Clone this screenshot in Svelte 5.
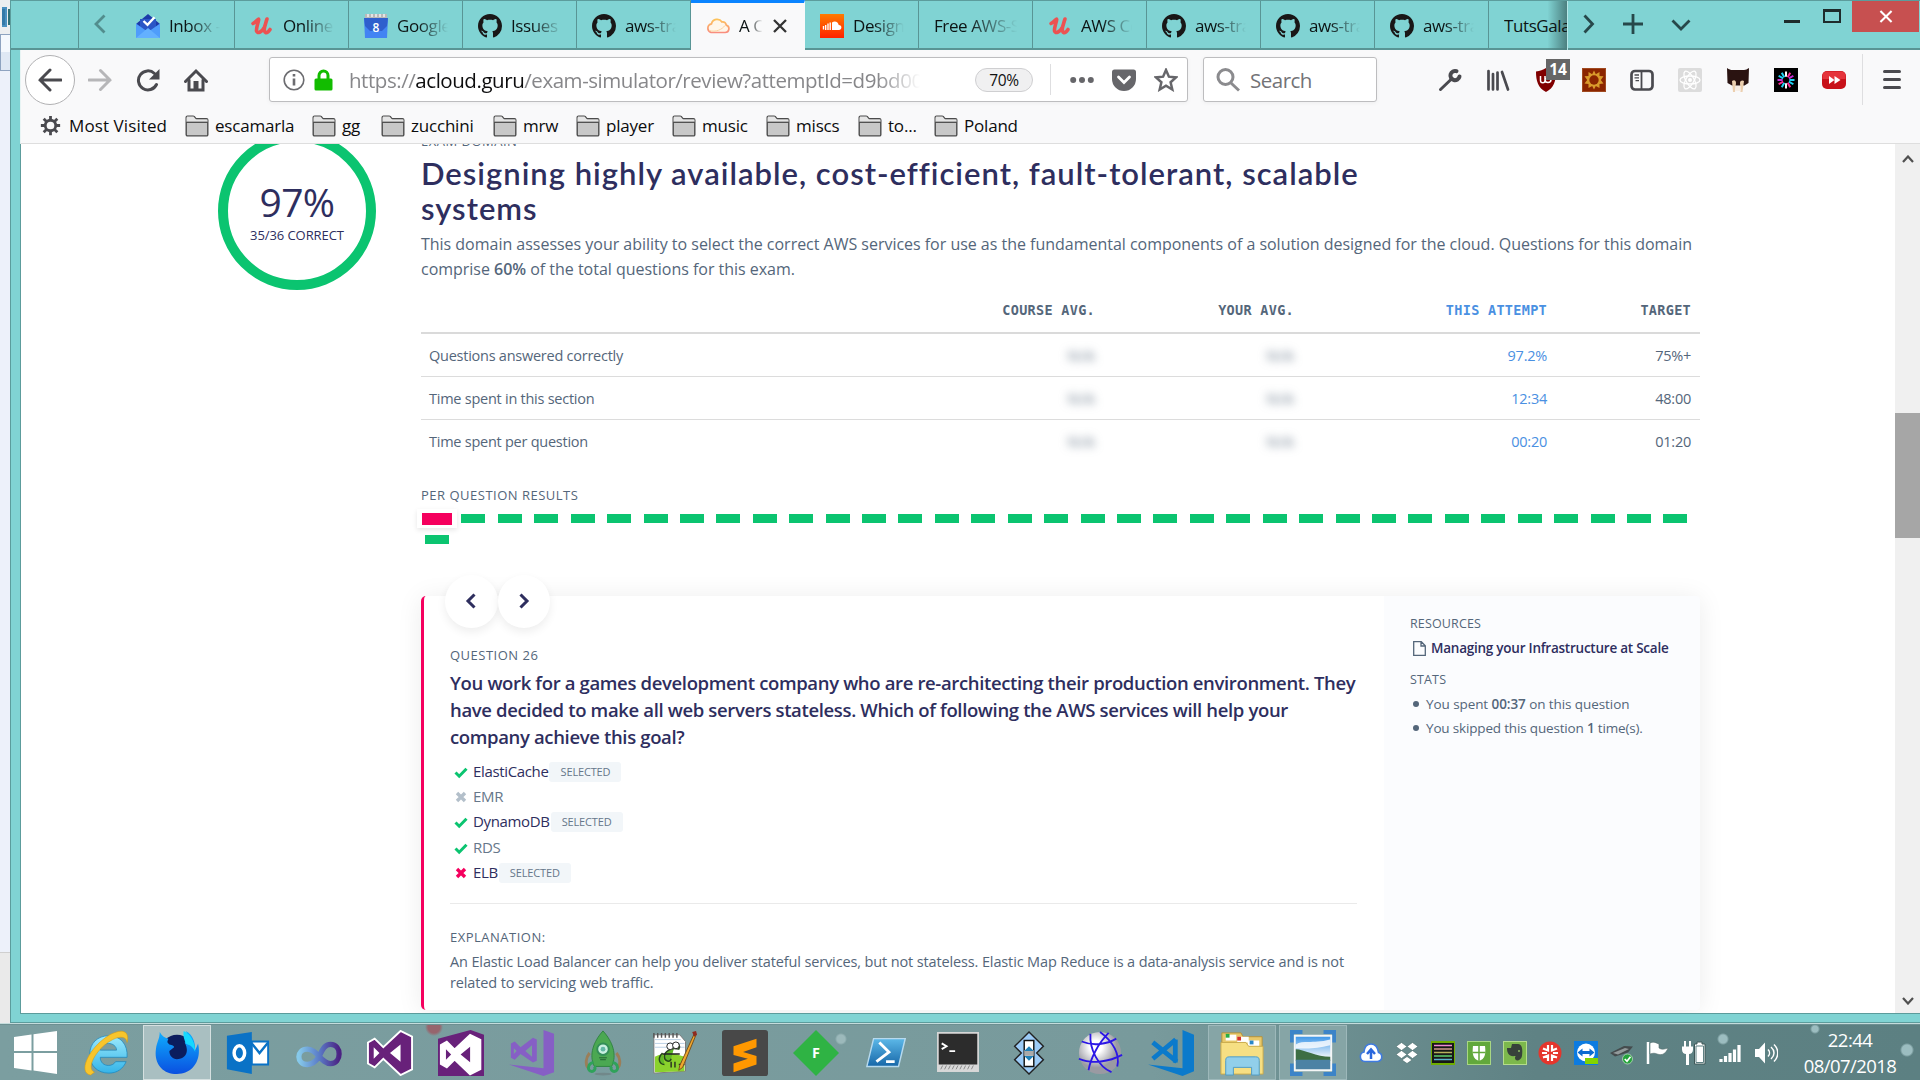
<script>
  const tabs = [
    { icon: 'inbox', label: 'Inbox - e' },
    { icon: 'udemy', label: 'Online C' },
    { icon: 'calendar', label: 'Google C' },
    { icon: 'github', label: 'Issues · a' },
    { icon: 'github', label: 'aws-train' },
    { icon: 'cloud', label: 'A Clo', active: true },
    { icon: 'soundcloud', label: 'Designin' },
    { icon: null, label: 'Free AWS-Sol' },
    { icon: 'udemy', label: 'AWS Ce' },
    { icon: 'github', label: 'aws-train' },
    { icon: 'github', label: 'aws-train' },
    { icon: 'github', label: 'aws-train' },
    { icon: null, label: 'TutsGalaxy', last: true }
  ];

  const bookmarks = [
    ['escamarla', 127], ['gg', 69], ['zucchini', 112], ['mrw', 83], ['player', 96],
    ['music', 94], ['miscs', 92], ['to...', 76], ['Poland', 100]
  ];

  const extensions = ['wrench', 'library', 'ublock', 'sun', 'sidebar', 'react', 'cat', 'burst', 'video'];

  const rows = [
    ['Questions answered correctly', '97.2%', '75%+'],
    ['Time spent in this section', '12:34', '48:00'],
    ['Time spent per question', '00:20', '01:20']
  ];

  const results = Array.from({ length: 36 }, (_, i) => i !== 0);

  const options = [
    { name: 'ElastiCache', mark: 'ok', selected: true },
    { name: 'EMR', mark: 'off', selected: false },
    { name: 'DynamoDB', mark: 'ok', selected: true },
    { name: 'RDS', mark: 'ok', selected: false },
    { name: 'ELB', mark: 'bad', selected: true }
  ];

  const apps = [
    'ie', 'firefox', 'outlook', 'infinity', 'vs', 'vsbox', 'vslight', 'rocket', 'notepad', 'sublime',
    'forest', 'powershell', 'terminal', 'diamonds', 'sphere', 'vscode', 'explorer', 'snip'
  ];
  const tray = ['clouddrive', 'dropbox', 'bars', 'shield', 'evernote', 'redball', 'teamviewer', 'scanner', 'flag', 'power', 'signal', 'volume'];

  // Twelve spokes of the burst icon, clockwise from the top
  const spokes = ['#fff', '#ff2d95', '#c62dd8', '#20d3f5', '#20d3f5', '#ff2d95', '#fff', '#20d3f5', '#ff2d95', '#c62dd8', '#20d3f5', '#20d3f5'];
</script>

{#snippet icon(name)}
  {#if name === 'inbox'}
    <svg viewBox="0 0 24 24"><path d="M0 10 12 0l12 10v3H0z" fill="#1c3aa9" /><path d="M4 5h16v11H4z" fill="#2a56c6" /><path d="M0 9.500 12 18 24 9.500V24H0z" fill="#4f9dfb" /><path d="M0 24 12 14l12 10z" fill="#63b0ff" /><path d="m7.500 7 4 3.800 7-7.500" fill="none" stroke="#fff" stroke-width="2.400" /></svg>
  {:else if name === 'udemy'}
    <svg viewBox="0 0 24 24"><path d="M3 9.500C6 8 8 5 8.500 5c1 0-2.500 8.500-2 12 .5 2.500 5 2 8-4 1-2.500 1.500-5.500 2.500-8C15 11 13.500 17.500 15.500 18.500c1.500.5 3.500-1.500 4.500-3" fill="none" stroke="#ec5252" stroke-width="3.600" stroke-linecap="round" stroke-linejoin="round" /></svg>
  {:else if name === 'calendar'}
    <svg viewBox="0 0 24 24"><path d="M1 0h22v5H1z" fill="#b9b9b9" /><path d="M4 0v3M8 0v3M12 0v3M16 0v3M20 0v3" stroke="#f1f1f1" stroke-width="1.500" /><path d="M0 4h24l-1 20H1z" fill="#4284f3" /><path d="M0 4h24l-1 8-5 5H6l-5-5z" fill="#2f5fcd" /><text x="12" y="18" text-anchor="middle" font-size="12" font-weight="600" fill="#fff">8</text></svg>
  {:else if name === 'github'}
    <svg viewBox="0 0 16 16"><path fill="#191717" d="M8 0C3.580 0 0 3.580 0 8c0 3.540 2.290 6.530 5.470 7.590.4.070.55-.17.55-.38 0-.19-.01-.82-.01-1.490-2.010.37-2.530-.49-2.690-.94-.09-.23-.48-.94-.82-1.130-.28-.15-.68-.52-.01-.53.63-.01 1.080.58 1.230.82.72 1.210 1.870.87 2.330.66.070-.52.28-.87.51-1.070-1.780-.2-3.640-.89-3.640-3.950 0-.87.31-1.590.82-2.150-.08-.2-.36-1.020.08-2.120 0 0 .67-.21 2.200.82.64-.18 1.320-.27 2-.27s1.360.09 2 .27c1.530-1.040 2.200-.82 2.200-.82.44 1.100.16 1.920.08 2.120.51.56.82 1.270.82 2.150 0 3.070-1.870 3.750-3.650 3.950.29.25.54.73.54 1.480 0 1.070-.01 1.930-.01 2.200 0 .21.15.46.55.38A8.010 8.010 0 0 0 16 8c0-4.420-3.580-8-8-8z" /></svg>
  {:else if name === 'cloud'}
    <svg viewBox="0 0 24 24"><defs><linearGradient id="cl" x2="0" y2="1"><stop stop-color="#fdc35c" /><stop offset="1" stop-color="#f98d7e" /></linearGradient></defs><path d="M5 18.500h14a3.800 3.800 0 0 0 1.300-7.400A4 4 0 0 0 16 8 5.800 5.800 0 0 0 5.500 9.800 4.500 4.500 0 0 0 5 18.500z" fill="#fff6ea" stroke="url(#cl)" stroke-width="1.700" /><path d="M3 16.500c7 2 13-1 16-5" fill="none" stroke="#fbd2a0" /></svg>
  {:else if name === 'soundcloud'}
    <svg viewBox="0 0 24 24"><defs><linearGradient id="sc" x2="0" y2="1"><stop stop-color="#ff7b00" /><stop offset="1" stop-color="#ff2200" /></linearGradient></defs><path d="M0 0h24v24H0z" fill="url(#sc)" /><path d="M12 16V8.500c3-2.500 6.500 0 6.700 2.500 3.800 0 3.300 5 .3 5z" fill="#fff" /><path d="M3.500 12v3.500M5.700 11v5M8 9.500V16M10.200 8.500V16" stroke="#fff" stroke-width="1.400" /></svg>
  {:else if name === 'wrench'}
    <svg viewBox="0 0 24 24"><path d="M2.500 21.500 14 10.500" stroke="#4a4a4f" stroke-width="3" stroke-linecap="round" /><path d="M18.500 3.200a4.600 4.600 0 1 0 3 5.300" fill="none" stroke="#4a4a4f" stroke-width="4" stroke-linecap="round" /></svg>
  {:else if name === 'library'}
    <svg viewBox="0 0 24 24"><g stroke="#4a4a4f" stroke-width="2.700" stroke-linecap="round"><path d="M2.500 3v18.500M7 6v15.500M11.500 4.500v17M16 4l6 17.500" stroke="#4a4a4f" /></g></svg>
  {:else if name === 'ublock'}
    <svg viewBox="0 0 24 24"><path d="M12 0c3 2 6 3 10 3.500C22 13 20 20 12 24 4 20 2 13 2 3.500 6 3 9 2 12 0z" fill="#800000" /><path d="M6.500 8v4.500c0 3 4.500 3 4.500 0V8m0 3.500c0 4 6 4 6 0s-4-4-5 0" fill="none" stroke="#fff" stroke-width="1.500" /></svg>
  {:else if name === 'sun'}
    <svg viewBox="0 0 24 24"><rect x=".5" y=".5" width="23" height="23" fill="#8b2500" stroke="#a04a20" /><path d="m12 2.500 1.800 3.700L17.500 4v4l4 .2-2.700 3.800 2.700 3.600-4 .4v4l-3.700-2L12 21.500 10.200 18l-3.700 2v-4l-4-.4L5.200 12 2.500 8.200l4-.2V4l3.700 2.200z" fill="#d99a2b" /><circle cx="12" cy="12" r="4.700" fill="#8b2500" /></svg>
  {:else if name === 'sidebar'}
    <svg viewBox="0 0 24 24"><rect x="1.500" y="3" width="21" height="18.500" rx="3.500" fill="none" stroke="#4a4a4f" stroke-width="2.700" /><path d="M11.500 3v18" stroke="#4a4a4f" stroke-width="1.800" /><path d="M4.500 7h4.500M4.500 9.800h4.500M5.500 12.600H9" stroke="#4a4a4f" stroke-width="1.300" /></svg>
  {:else if name === 'react'}
    <svg viewBox="0 0 24 24"><rect width="24" height="24" rx="2" fill="#dcdcdc" /><g fill="none" stroke="#fff" stroke-width="1.300"><ellipse cx="12" cy="12" rx="10" ry="4" /><ellipse cx="12" cy="12" rx="10" ry="4" transform="rotate(60 12 12)" /><ellipse cx="12" cy="12" rx="10" ry="4" transform="rotate(120 12 12)" /></g><circle cx="12" cy="12" r="2" fill="#fff" /></svg>
  {:else if name === 'cat'}
    <svg viewBox="0 0 24 24"><path d="M1 0c2 1.500 4 2 5 2h12c2 0 3-1 5-2l-.5 15-4 2.500H6L1.500 15z" fill="#2a1311" /><path d="M6 13c2-1.500 4-1 4 2l-1 9H7zM14 15c0-3 3-3 4-2l-1.500 11h-2z" fill="#ecd0b0" /><path d="M9.500 18h5v5h-5z" fill="#f8efe6" /></svg>
  {:else if name === 'burst'}
    <svg viewBox="0 0 24 24"><path d="M0 0h24v24H0z" fill="#000" />{#each spokes as color, i}<path d="M12 3.500v5.200" stroke={color} stroke-width="2" transform="rotate({i * 30} 12 12)" />{/each}</svg>
  {:else if name === 'video'}
    <svg viewBox="0 0 24 24"><rect y="3" width="24" height="18" rx="5" fill="#c8121a" /><path d="M.5 11V8c0-3 1.500-4.500 4.500-4.500h14c3 0 4.500 1.500 4.500 4.500v3z" fill="#e5343b" /><path d="m7 8 5.500 4L7 16zM12.500 8l6 4-6 4z" fill="#fff" /></svg>
  {:else if name === 'folder'}
    <svg viewBox="0 0 24 22"><path d="M1.200 4V2.500c0-.8.5-1.300 1.300-1.300h5.700c1 0 1.600.8 2.300 2 .3.500.8.600 1.500.6h9.500c.8 0 1.300.5 1.300 1.300v14.600c0 .8-.5 1.200-1.300 1.200h-19c-.8 0-1.300-.5-1.300-1.300z" fill="#c8c8c8" stroke="#4c4c4c" stroke-width="1.400" /><path d="M1.500 3v4h21V4.500H11L8.500 1.600H2z" fill="#e4e4e4" /><path d="M1.200 7.300h21.600" stroke="#4c4c4c" stroke-width="1.300" /></svg>
  {:else if name === 'ie'}
    <svg viewBox="0 0 48 48"><defs><linearGradient id="ieg" x2="0" y2="1"><stop stop-color="#9be9fd" /><stop offset="1" stop-color="#35b4e8" /></linearGradient></defs><path d="M45 33c-3 7-9 12-18 12C15 45 7 37 7 25.500S15 6 27 6s20 9 19 22.500H18c0 5.500 4 8.500 8.500 8.500 3.500 0 6-1.500 7.500-4zM18 21h17c0-4-4-7-8.500-7S18 17 18 21z" fill="url(#ieg)" stroke="#1f88bd" stroke-width=".8" fill-rule="evenodd" /><path d="M8 47C-6 45 6 18 28 5c13-7 21-4 18 8-.5-6-7-7-15-3C15 18 2 40 12 44z" fill="#f8c52c" stroke="#d99d10" stroke-width=".6" /></svg>
  {:else if name === 'firefox'}
    <svg viewBox="0 0 48 48"><defs><linearGradient id="ffg" x2="0" y2="1"><stop stop-color="#0fb0ff" /><stop offset="1" stop-color="#0a4fe0" /></linearGradient></defs><circle cx="24" cy="22" r="17" fill="#0b1d5e" /><path d="M6 2c2 4 5 6 9 7-1 3-2 4 1 6 3 1 5 1 5 3l-5 4c0 6 5 10 11 8 8-2 9-10 5-17 3 1 4-8 1-12 8 4 10 12 10 20l3-7c4 18-6 32-22 32S0 34 2 20C3 12 6 9 6 2z" fill="url(#ffg)" /><path d="M31 1c8 4 12 12 12 22-3-8-9-8-10-9-1-4-3-7-2-13z" fill="#15d8ff" /></svg>
  {:else if name === 'outlook'}
    <svg viewBox="0 0 48 48"><path d="M28 12h17v24H28z" fill="#fff" stroke="#0a72c6" stroke-width="2" /><path d="m28 14 8 10 9-11" fill="none" stroke="#0a72c6" stroke-width="2.500" /><path d="M2 6 28 2v44L2 41z" fill="#0a72c6" /><ellipse cx="15" cy="24" rx="5.500" ry="7.500" fill="none" stroke="#fff" stroke-width="3.600" /></svg>
  {:else if name === 'infinity'}
    <svg viewBox="0 0 48 48"><defs><linearGradient id="ing"><stop stop-color="#86c9ea" /><stop offset=".5" stop-color="#5a7cc8" /><stop offset="1" stop-color="#4b2283" /></linearGradient></defs><path d="M24 28c-4 6-8 8-12 8-12 0-12-16 0-16 10 0 14 15 24 15 12 0 12-20 0-20-7 0-9 7-12 13z" fill="none" stroke="url(#ing)" stroke-width="5.500" /></svg>
  {:else if name === 'vs' || name === 'vsbox'}
    <svg viewBox="0 0 48 48">{#if name === 'vsbox'}<path d="M0 9 34 0l14 5v43H0z" fill="#68217a" />{/if}<path d="M1 13 8 9l9 9L35 1l12 6v34l-12 6-18-17-9 9-7-4z" fill={name === 'vs' ? '#68217a' : '#fff'} stroke="#fff" stroke-width="2" transform={name === 'vs' ? '' : 'translate(2 4) scale(.9)'} /><path d="m7 18 6 6-6 6zM24 24l11-9v18z" fill={name === 'vs' ? '#fff' : '#68217a'} transform={name === 'vs' ? '' : 'translate(2 4) scale(.9)'} /></svg>
  {:else if name === 'vslight'}
    <svg viewBox="0 0 48 48"><path d="m36 0 11 4v40l-11 4L0 36l36 4z" fill="#865fc5" /><path d="m2 14 4-2 6 6L25 8l4 2v22l-4 2-13-9-6 6-4-2zm3 5v6l3-3zm19-3-7 6 7 6z" fill="#865fc5" fill-rule="evenodd" /></svg>
  {:else if name === 'rocket'}
    <svg viewBox="0 0 48 48"><ellipse cx="24" cy="46" rx="9" ry="1.500" fill="#71888a" /><path d="M10 24c-4 5-5 12-1 16M38 24c4 5 5 12 1 16" fill="none" stroke="#9b7e58" stroke-width="3" /><path d="M24 1C14 12 9 26 15 38h18C39 26 34 12 24 1z" fill="#4ba852" stroke="#2f8440" /><path d="M14 34c-5 0-7 7-3 9 3 1 6-2 4-5M34 34c5 0 7 7 3 9-3 1-6-2-4-5" fill="none" stroke="#2fa25a" stroke-width="3" /><circle cx="24" cy="20" r="6" fill="#c8efe0" stroke="#338e58" stroke-width="2" /><circle cx="24" cy="20" r="2.500" fill="#64b7a5" /><path d="M20 29h8M21 31h6" stroke="#225f35" /></svg>
  {:else if name === 'notepad'}
    <svg viewBox="0 0 48 48"><path d="M3 5h27l6 7v31L3 45z" fill="#fff" stroke="#777" /><path d="M4 14h31M4 18h31M4 10h27" stroke="#b9cfe4" /><path d="M4 28c10-5 20-4 31 0v15L4 44z" fill="#8bd22c" /><path d="M25 15c4-2 6 2 4 5-8-2-15 2-15 8 0 5 6 6 7 2m-9-6c-6 6-3 12 2 12" fill="#62b829" stroke="#26441c" stroke-width="1.500" /><circle cx="20" cy="17" r="3.500" fill="#fff" stroke="#222" /><circle cx="26" cy="16" r="3.500" fill="#fff" stroke="#222" /><path d="M12 25h18M21 33v6M25 33v6M29 36h6M32 33v6" stroke="#222" stroke-width="1.400" /><path d="M3 3v5M7 3v5M11 3v5M15 3v5M19 3v5M23 3v5M27 3v5" stroke="#555" stroke-width="1.500" /><path d="m46 2 1 3-14 34-4 3 1-5z" fill="#f0a72d" stroke="#744e1b" /><path d="m43 2 4-1 1 4-3 2z" fill="#8e2b20" /></svg>
  {:else if name === 'sublime'}
    <svg viewBox="0 0 48 48"><rect width="48" height="48" rx="3" fill="#484848" /><path d="m12 17 24-8v9l-14 5 14 4v9l-24 8v-9l15-5-15-4z" fill="#ff9800" /></svg>
  {:else if name === 'forest'}
    <svg viewBox="0 0 48 48"><path d="m24 0 24 24-24 24L0 24z" fill="#2fb344" /><text x="24" y="29.500" text-anchor="middle" font-size="15" font-weight="700" fill="#fff">F</text></svg>
  {:else if name === 'powershell'}
    <svg viewBox="0 0 48 48"><defs><linearGradient id="psg" x2="0" y2="1"><stop stop-color="#5cb8e8" /><stop offset="1" stop-color="#1767a8" /></linearGradient></defs><path d="M10 9h33l-7 29H3z" fill="url(#psg)" stroke="#b7daee" stroke-width="1.500" /><path d="m16 13 10 10-13 10M23 33h9" fill="none" stroke="#fff" stroke-width="3" /></svg>
  {:else if name === 'terminal'}
    <svg viewBox="0 0 48 48"><path d="M3 3h42v40H3z" fill="#2c2c2c" stroke="#d7d7d7" stroke-width="1.800" /><path d="M3 36h42v7H3z" fill="#d8d8d8" /><path d="M6 41l2-4m2 4 2-4m2 4 2-4m2 4 2-4m2 4 2-4m2 4 2-4m2 4 2-4m2 4 2-4m2 4 2-4" stroke="#888" /><path d="m7 14 5 3-5 3M15 22h6" fill="none" stroke="#fff" stroke-width="2" /></svg>
  {:else if name === 'diamonds'}
    <svg viewBox="0 0 48 48"><path d="m24 2 15 15-7 7 7 7-15 15L9 31l7-7-7-7z" fill="#9ccbf7" stroke="#222" stroke-width="1.500" /><path d="M19 11h10v27H19z" fill="#fff" stroke="#111" stroke-width="1.500" /><path d="M19 21h10v6H19z" fill="#aaa" /><path d="m19 22 5-5 5 5zM19 27h10l-5 5z" fill="#2080b8" /></svg>
  {:else if name === 'sphere'}
    <svg viewBox="0 0 48 48"><defs><radialGradient id="spg" cx=".4" cy=".35"><stop offset=".3" stop-color="#fff" /><stop offset="1" stop-color="#9a9aa2" /></radialGradient></defs><circle cx="24" cy="24" r="22" fill="url(#spg)" /><g fill="none" stroke="#2b16e6" stroke-width="1.900"><path d="M5 12c12 5 26 3 36-3M2 30c14 6 32 3 45-4M14 4c-1 16 8 34 22 40M33 3C22 14 14 30 12 42M24 2c14 10 21 24 18 36" /></g></svg>
  {:else if name === 'vscode'}
    <svg viewBox="0 0 48 48"><path d="m36 0 12 5v38l-12 5L0 36l36 4z" fill="#0b7acb" /><path d="M5 13 30 33M5 30l24-20" stroke="#0b7acb" stroke-width="5" /><path d="M26 10h5v24h-5z" fill="#0b7acb" /></svg>
  {:else if name === 'explorer'}
    <svg viewBox="0 0 48 48"><path d="M3 3h20l2 4h20v36H3z" fill="#e8c96a" stroke="#b69238" /><path d="M7 5h11v6H7zM19 7h12v6H19zM30 11h12v6H30z" fill="#fff" /><path d="M7 4h4v4H7z" fill="#27ae45" /><path d="M19 7h4v4h-4z" fill="#d5342a" /><path d="M32 11h4v4h-4z" fill="#2a86c8" /><path d="M2 13h26l3 4h15v29H2z" fill="#f6df83" stroke="#c9a94c" /><path d="M7 47V32c0-3 1-4 4-4h27c3 0 4 1 4 4v15h-8v-8H15v8z" fill="#91cfea" stroke="#4e9bc3" /></svg>
  {:else if name === 'snip'}
    <svg viewBox="0 0 48 48"><defs><linearGradient id="sng" x2="0" y2="1"><stop stop-color="#3f97e8" /><stop offset="1" stop-color="#f2f8fc" /></linearGradient></defs><path d="M2 13V2h11M35 2h11v11M46 35v11H35M13 46H2V35" fill="none" stroke="#3c84c8" stroke-width="4.500" /><path d="M4 5h40v38H4z" fill="#f4f6f6" /><path d="M6 7h36v22H6z" fill="url(#sng)" /><path d="M6 15c8-5 16 0 36-5v6c-14 3-20 4-36 3z" fill="#fff" opacity=".8" /><path d="M6 20c8 0 22 8 36 8v4H6z" fill="#3d6e43" /><path d="M6 31h36v10H6z" fill="#4c82a4" /></svg>
  {:else if name === 'clouddrive'}
    <svg viewBox="0 0 24 24"><path d="M6 20.500h12.500c6-1 5-8 1-9C18.500 5 16 3 12 3S5.500 6 5 11c-5 1-5 9 1 9.500z" fill="#fff" stroke="#3f7be0" stroke-width="1.600" /><path d="M12 18V9m-4 4 4-4.500 4 4.500" fill="none" stroke="#2a67dd" stroke-width="2.500" /></svg>
  {:else if name === 'dropbox'}
    <svg viewBox="0 0 24 24"><path d="m6.500 1.500 5.500 4-5.500 4L1 5.500zM17.500 1.500l5.500 4-5.500 4-5.500-4zM6.500 9.500l5.500 4-5.500 4-5.500-4zM17.500 9.500l5.500 4-5.500 4-5.500-4zM12 15.500l5 3.500-5 3.500L7 19z" fill="#fff" stroke="#48696a" stroke-width=".6" /></svg>
  {:else if name === 'bars'}
    <svg viewBox="0 0 24 24"><path d="M0 0h24v24H0z" fill="#6fae00" /><path d="M1 2h22v20H1z" fill="#171717" /><g stroke-width="1.500"><path d="M3 4.500h18" stroke="#ef8bd0" /><path d="M3 8h18" stroke="#d49b8c" /><path d="M3 11.500h18" stroke="#b8b05c" /><path d="M3 15h18" stroke="#5fce6f" /><path d="M3 18.500h18" stroke="#59b2ce" /></g></svg>
  {:else if name === 'shield'}
    <svg viewBox="0 0 24 24"><rect x=".5" y=".5" width="23" height="23" fill="#62a83c" stroke="#a8d783" /><path d="M6 5c4 0 8 0 12 0 1 8 0 13-6 15C6 18 5 13 6 5z" fill="#fff" /><path d="M12 5v15M5.500 11.500h13" stroke="#62a83c" stroke-width="1.500" /></svg>
  {:else if name === 'evernote'}
    <svg viewBox="0 0 24 24"><rect x=".5" y=".5" width="23" height="23" fill="#7cb84c" stroke="#b4dc8c" /><path d="M9 3h6c4 0 5 5 4 12-1 5-7 6-7 2 0-3 3-2 3-1l-3-1c-6 1-8-3-8-8h4z" fill="#37413a" /><circle cx="16" cy="10" r="1" fill="#8cbb66" /></svg>
  {:else if name === 'redball'}
    <svg viewBox="0 0 24 24"><circle cx="12" cy="12" r="11.500" fill="#e5352c" /><g stroke="#fff" stroke-width="2.200" fill="none"><path d="M10 4v5.500L5 7.500M14 4v5.500l5-2M10 20v-5.500l-5 2M14 20v-5.500l5 2M4 12h5M15 12h5" /></g></svg>
  {:else if name === 'teamviewer'}
    <svg viewBox="0 0 24 24"><path d="M0 0h24v24H0z" fill="#0c7be0" /><circle cx="12" cy="11.500" r="9" fill="#fff" /><path d="m3.500 11.500 5-4v2.500h7V7.500l5 4-5 4V13h-7v2.500z" fill="#0c6bd0" /><path d="M11 17h13v6H11z" fill="#83d400" /></svg>
  {:else if name === 'scanner'}
    <svg viewBox="0 0 24 24"><path d="M0 12 14 5l9 .5-5 6-13 4z" fill="#444b4d" /><path d="m3 12 12-5 4 1-11 5.500z" fill="#929a9b" /><circle cx="17.500" cy="18" r="5" fill="#25a33b" stroke="#b9d9be" stroke-width=".8" /><path d="m14.800 18 2.200 2.300 3.500-4.500" fill="none" stroke="#fff" stroke-width="1.700" /></svg>
  {:else if name === 'flag'}
    <svg viewBox="0 0 24 24"><path d="M2 1v22" stroke="#fff" stroke-width="2.500" /><path d="M4 2c4-2 6 0 9 1v4c3 2 6 1 9 0-2 5-5 8-11 6-2-1-4-1-7 0z" fill="#fff" stroke="#506b6c" stroke-width=".6" /></svg>
  {:else if name === 'power'}
    <svg viewBox="0 0 24 24"><path d="M3 0v6M8 0v6" stroke="#fff" stroke-width="2" /><path d="M0 5.500h11v3c0 3-2 4.500-4 4.500v11H4V13c-2 0-4-1.500-4-4.500z" fill="#fff" /><path d="M12.500 3H15V1h5v2h3v20h-10.500z" fill="#fff" stroke="#3f5859" stroke-width="1" /><path d="M14 5h7.500v16.500H14z" fill="none" stroke="#5f8082" stroke-width="1" /></svg>
  {:else if name === 'signal'}
    <svg viewBox="0 0 24 24"><path d="M3 21v-3M7.500 21v-6M12 21v-9M16.500 21V8.500M21 21V4" stroke="#fff" stroke-width="3.200" /></svg>
  {:else if name === 'volume'}
    <svg viewBox="0 0 24 24"><path d="M1 8h4l6-6.500v21L5 16H1z" fill="#fff" /><path d="M14 8.500c2 2 2 5 0 7M17 6c4 3.500 4 8.500 0 12M20 3.500c5 5 5 12 0 17" fill="none" stroke="#fff" stroke-width="1.500" /></svg>
  {/if}
{/snippet}

<div class="desktop">
  <div class="work">
    <div class="behind">
      <div class="behind-top"></div>
      <div class="behind-bar"></div>
      <div class="behind-body"></div>
      <div class="behind-foot"></div>
    </div>

    <div class="window">
      <div class="tabstrip">
        <div class="lead"></div>
        <div class="scroll-left">
          <svg viewBox="0 0 12 20"><path d="M10.500 1.500 2 10l8.500 8.500" /></svg>
        </div>
        {#each tabs as tab}
          <div class="tab" class:active={tab.active} class:last={tab.last}>
            {#if tab.icon}<span class="favicon">{@render icon(tab.icon)}</span>{/if}
            <span class="tab-label">{tab.label}</span>
            {#if tab.active}
              <svg class="tab-close" viewBox="0 0 14 14"><path d="m1 1 12 12M13 1 1 13" /></svg>
            {/if}
          </div>
        {/each}
        <div class="strip-tools">
          <svg class="t-right" viewBox="0 0 12 20"><path d="m1.500 1.500 8 8.500-8 8.500" /></svg>
          <svg class="t-plus" viewBox="0 0 22 22"><path d="M11 1v20M1 11h20" /></svg>
          <svg class="t-down" viewBox="0 0 20 12"><path d="m1.500 1.500 8.500 8.500 8.500-8.500" /></svg>
        </div>
        <div class="win-buttons">
          <span class="w-min"></span>
          <span class="w-max"></span>
          <span class="w-close"><svg viewBox="0 0 14 14"><path d="m1 1 12 12M13 1 1 13" /></svg></span>
        </div>
      </div>

      <div class="chrome">
        <div class="toolbar">
          <div class="back"><svg viewBox="0 0 24 24"><path d="M23 12H2M12 2 2 12l10 10" /></svg></div>
          <div class="slot fwd"><svg viewBox="0 0 24 24"><path d="M1 12h21M12.500 2.500 22 12l-9.500 9.500" /></svg></div>
          <div class="slot"><svg viewBox="0 0 24 24"><path d="M20.500 16.500A9.500 9.500 0 1 1 18.500 5.500" /><path class="solid" d="M23.500 1v10.500H13z" /></svg></div>
          <div class="slot"><svg viewBox="0 0 24 24"><path d="M1.500 13.500 12 3l10.500 10.500" /><path d="M5 12v10h14V12" /><path class="solid" d="M9.500 13h5v9h-5z" /></svg></div>
          <div class="urlbar">
            <svg class="info" viewBox="0 0 22 22"><circle cx="11" cy="11" r="9.800" /><path d="M11 9.500v7M11 5v2.600" /></svg>
            <svg class="lock" viewBox="0 0 18 22"><path class="shackle" d="M4.500 11V6.500a4.500 4.500 0 0 1 9 0V11" /><rect y="9.500" width="18" height="12" rx="1.500" /></svg>
            <span class="url">https://<b>acloud.guru</b>/exam-simulator/review?attemptId=d9bd00</span>
            <span class="zoom">70%</span>
            <span class="sep"></span>
            <svg class="dots" viewBox="0 0 24 24"><circle cx="3.200" cy="12" r="3" /><circle cx="12" cy="12" r="3" /><circle cx="20.800" cy="12" r="3" /></svg>
            <svg class="pocket" viewBox="0 0 24 24"><path d="M2.500 1.500h19A2.500 2.500 0 0 1 24 4v7a12 12 0 0 1-24 0V4a2.500 2.500 0 0 1 2.500-2.500z" /><path class="tick" d="m6.500 9 5.500 5.500L17.500 9" /></svg>
            <svg class="star" viewBox="0 0 24 24"><path d="m12 2 2.900 6.700 7.100.7-5.400 4.900 1.700 7.200-6.300-3.800-6.300 3.800 1.700-7.200L2 9.400l7.100-.7z" /></svg>
          </div>
          <div class="search">
            <svg viewBox="0 0 24 24"><circle cx="9.500" cy="9" r="7.500" /><path d="m15 15 8 7.500" /></svg>
            <span>Search</span>
          </div>
          <div class="exts">
            {#each extensions as name}
              <div class="slot ext">{@render icon(name)}{#if name === 'ublock'}<span class="badge">14</span>{/if}</div>
            {/each}
          </div>
          <div class="menu"><span></span><span></span><span></span></div>
        </div>

        <div class="bookmarks">
          <div class="visited">
            <svg viewBox="0 0 24 24"><circle cx="12" cy="12" r="6" /><path d="M12 1v5M12 18v5M1 12h5M18 12h5M4.200 4.200l3.500 3.500M16.300 16.300l3.500 3.500M19.800 4.200l-3.500 3.500M7.700 16.300l-3.500 3.500" /></svg>
            <span>Most Visited</span>
          </div>
          {#each bookmarks as [label, width]}
            <div class="bookmark" style="width:{width}px">{@render icon('folder')}<span>{label}</span></div>
          {/each}
        </div>
      </div>

      <div class="viewport">
        <main>
          <aside class="score">
            <div class="ring">
              <div class="percent">97%</div>
              <div class="correct">35/36 CORRECT</div>
            </div>
          </aside>

          <section class="domain">
            <div class="eyebrow top">EXAM DOMAIN</div>
            <h1>Designing highly available, cost-efficient, fault-tolerant, scalable<br />systems</h1>
            <p class="intro">This domain assesses your ability to select the correct AWS services for use as the fundamental components of a solution designed for the cloud. Questions for this domain<br />comprise <b>60%</b> of the total questions for this exam.</p>

            <div class="table">
              <div class="tr head"><span></span><span>COURSE AVG.</span><span>YOUR AVG.</span><span class="blue">THIS ATTEMPT</span><span>TARGET</span></div>
              {#each rows as [label, attempt, target]}
                <div class="tr">
                  <span class="name">{label}</span>
                  <span class="hidden-value">N/A</span>
                  <span class="hidden-value">N/A</span>
                  <span class="blue">{attempt}</span>
                  <span>{target}</span>
                </div>
              {/each}
            </div>

            <div class="eyebrow per">PER QUESTION RESULTS</div>
            <div class="results">
              {#each results as correct}
                <div class="cell" class:wrong={!correct}><span></span></div>
              {/each}
            </div>

            <article class="card">
              <div class="pager">
                <span><svg viewBox="0 0 12 18"><path d="M9.500 2.500 3 9l6.500 6.500" /></svg></span>
                <span><svg viewBox="0 0 12 18"><path d="M2.500 2.500 9 9l-6.500 6.500" /></svg></span>
              </div>
              <div class="question">
                <div class="eyebrow">QUESTION 26</div>
                <h2>You work for a games development company who are re-architecting their production environment. They<br />have decided to make all web servers stateless. Which of following the AWS services will help your<br />company achieve this goal?</h2>
                <ul class="options">
                  {#each options as option}
                    <li class={option.mark} class:selected={option.selected}>
                      {#if option.mark === 'ok'}
                        <svg viewBox="0 0 14 14"><path d="m1.500 7.500 3.700 3.700 7.300-7.500" /></svg>
                      {:else}
                        <svg viewBox="0 0 14 14"><path d="m3 3 8 8M11 3l-8 8" /></svg>
                      {/if}
                      <span class="answer">{option.name}</span>
                      {#if option.selected}<span class="tag">SELECTED</span>{/if}
                    </li>
                  {/each}
                </ul>
                <hr />
                <div class="eyebrow">EXPLANATION:</div>
                <p class="explain">An Elastic Load Balancer can help you deliver stateful services, but not stateless. Elastic Map Reduce is a data-analysis service and is not<br />related to servicing web traffic.</p>
              </div>
              <div class="side">
                <div class="eyebrow small">RESOURCES</div>
                <div class="resource">
                  <svg viewBox="0 0 13 15"><path d="M.7.700h7.600l4 4v9.600H.7zM8 .7V5h4.300" /></svg>
                  <span>Managing your Infrastructure at Scale</span>
                </div>
                <div class="eyebrow small stats">STATS</div>
                <ul class="facts">
                  <li><i></i><span class="spent">You spent <b>00:37</b> on this question</span></li>
                  <li><i></i><span>You skipped this question <b>1</b> time(s).</span></li>
                </ul>
              </div>
            </article>
          </section>
        </main>
        <div class="scrollbar">
          <svg viewBox="0 0 12 8"><path d="m1 7 5-5.500L11 7" /></svg>
          <div class="thumb"></div>
          <svg viewBox="0 0 12 8"><path d="m1 1 5 5.500L11 1" /></svg>
        </div>
      </div>
    </div>
  </div>

  <div class="taskbar">
    <div class="start"><svg viewBox="0 0 43 43"><path d="M0 6 17.500 3.500V20H0zM19.500 3.200 43 0v20H19.500zM0 22h17.500v17.500L0 37zM19.500 22H43v21l-23.500-3.500z" /></svg></div>
    {#each apps as app}
      <div class="app {app}">{@render icon(app)}</div>
    {/each}
    <div class="tray">
      {#each tray as item}
        <div class="tray-item">{@render icon(item)}</div>
      {/each}
    </div>
    <div class="clock"><div>22:44</div><div>08/07/2018</div></div>
  </div>
</div>

<style>
  :global(body) { margin: 0; overflow: hidden; }
  .desktop { width: 1920px; height: 1080px; display: flex; flex-direction: column; overflow: hidden; font-family: "Open Sans", "Noto Sans", sans-serif; background: #fff; }
  svg { display: block; flex: none; }
  h1, h2, p, ul { margin: 0; padding: 0; font-weight: 400; }
  ul { list-style: none; }

  .work { height: 1023px; display: flex; border-bottom: 1px solid #c4dcdc; }
  .behind { width: 10px; display: flex; flex-direction: column; background: #edf1fa; }
  .behind-top { height: 34px; background: linear-gradient(90deg, #3479a8 0 3px, transparent 3px 6px, #2f6f76 6px) 2px 9px / 8px 16px no-repeat, linear-gradient(90deg, transparent 0 2px, #4a90c0 2px 7px, transparent 7px) 0 7px / 10px 20px no-repeat, #eceef0; }
  .behind-bar { height: 37px; border: 1px solid #8ea3c0; border-right: 0; box-sizing: border-box; background: linear-gradient(#f4f8fd 0 50%, #dfe8f4 50%); }
  .behind-body { flex: 1; }
  .behind-foot { height: 70px; border-top: 1px solid #cfcfcf; background: #eaeaea; }

  .window { flex: 1; min-width: 0; display: flex; flex-direction: column; background: #80d3d3; border-left: 1px solid #5c9c9c; border-bottom: 1px solid #5c9c9c; }

  .tabstrip { height: 50px; box-sizing: border-box; display: flex; border-top: 1px solid #5c9c9c; border-bottom: 2px solid #599595; }
  .lead { width: 67px; }
  .scroll-left { width: 43px; box-sizing: border-box; border-left: 1px solid #599595; padding: 13px 0 0 15px; }
  .scroll-left svg { width: 12px; height: 20px; }
  .scroll-left path { fill: none; stroke: #528d8d; stroke-width: 2.800; }
  .tab { width: 114px; height: 49px; box-sizing: border-box; flex: none; display: flex; align-items: center; padding: 1px 13px 1px 15px; border-right: 1px solid #599595; }
  .favicon { flex: none; width: 24px; height: 24px; margin-right: 9px; }
  .favicon svg { width: 24px; height: 24px; }
  .tab-label { flex: 1; min-width: 0; overflow: hidden; white-space: nowrap; font-size: 17px; letter-spacing: -0.4px; line-height: 26px; color: #0c1414; mask-image: linear-gradient(90deg, #000 40%, transparent 98%); }
  .active { height: 50px; margin-top: -1px; background: #f9f9fa; border-top: 3px solid #0a84ff; padding: 0 17px 2px 15px; border-right-color: transparent; }
  .active .tab-label { margin-right: 10px; }
  .tab-close { width: 14px; height: 16px; }
  .tab-close path { stroke: #333; stroke-width: 2.300; }
  .last { width: 79px; padding-right: 0; border-right: 1px solid #b6e8e8; background: linear-gradient(90deg, transparent 75%, #4c8080); }
  .last .tab-label { mask-image: none; }
  .strip-tools { width: 216px; display: flex; align-items: flex-start; }
  .strip-tools path { fill: none; stroke: #27484a; stroke-width: 2.800; }
  .t-right { width: 12px; height: 20px; margin: 13px 0 0 15px; }
  .t-plus { width: 22px; height: 22px; margin: 12px 0 0 27px; }
  .t-down { width: 20px; height: 12px; margin: 18px 0 0 27px; }
  .win-buttons { flex: 1; display: flex; align-items: flex-start; }
  .w-min { width: 16px; height: 3px; margin: 19px 23px 0 0; background: #1e2c2c; }
  .w-max { width: 18px; height: 14px; box-sizing: border-box; margin: 8px 11px 0 0; border: 2px solid #1e2c2c; border-top-width: 3px; }
  .w-close { width: 67px; height: 31px; display: grid; place-items: center; background: #c75050; }
  .w-close svg { width: 14px; height: 13px; }
  .w-close path { stroke: #fff; stroke-width: 2.200; }

  .chrome { height: 94px; margin-left: 9px; box-sizing: border-box; border-left: 1px solid #e8f4f4; border-bottom: 1px solid #dedede; background: #f9f9fa; }
  .toolbar { height: 59px; display: flex; align-items: center; }
  .toolbar svg { width: 24px; height: 24px; }
  .back { width: 50px; height: 50px; margin: 0 1px 0 4px; box-sizing: border-box; border: 1px solid #b1b1b3; border-radius: 50%; display: grid; place-items: center; background: #fff; }
  .back path, .slot > svg > path:not([stroke]):not([fill]) { fill: none; stroke: #4a4a4f; stroke-width: 3; stroke-linecap: round; }
  .slot > svg > path.solid:not([stroke]):not([fill]) { fill: #4a4a4f; stroke: none; }
  .slot { position: relative; width: 48px; display: grid; place-items: center; }
  .slot.fwd { opacity: .38; }
  .urlbar { width: 919px; height: 45px; margin-left: 49px; box-sizing: border-box; display: flex; align-items: center; border: 1px solid #bdbdbf; border-radius: 3px; background: #fff; box-shadow: 0 1px 4px #0000000d; padding-left: 13px; }
  .urlbar .info { width: 22px; height: 22px; fill: none; stroke: #6c6c70; stroke-width: 1.600; }
  .info path { stroke-width: 2.600; }
  .urlbar .lock { width: 19px; height: 22px; margin: 0 16px 0 9px; fill: #12bc00; }
  .shackle { fill: none; stroke: #12bc00; stroke-width: 3; }
  .url { width: 574px; overflow: hidden; white-space: nowrap; font-size: 20.500px; letter-spacing: -0.45px; line-height: 32px; color: #87878a; mask-image: linear-gradient(90deg, #000 92%, transparent 99.500%); }
  .url b { font-weight: 400; color: #0c0c0d; }
  .zoom { width: 58px; height: 24px; box-sizing: border-box; margin: 0 17px 0 52px; border: 1px solid #cfcfd1; border-radius: 12px; background: #f0f0f1; text-align: center; font-size: 15.500px; letter-spacing: -0.3px; line-height: 22px; color: #111; }
  .sep { width: 1px; height: 31px; background: #dedee0; margin-right: 19px; }
  .urlbar .dots, .urlbar .pocket { margin-right: 18px; fill: #66666a; }
  .pocket .tick { fill: none; stroke: #fff; stroke-width: 2.800; stroke-linecap: round; }
  .star { fill: none; stroke: #66666a; stroke-width: 2.500; }
  .search { width: 174px; height: 45px; margin-left: 15px; box-sizing: border-box; display: flex; align-items: center; gap: 10px; padding-left: 12px; border: 1px solid #bdbdbf; border-radius: 3px; background: #fff; box-shadow: 0 1px 4px #0000000d; font-size: 20.500px; letter-spacing: -0.5px; color: #737377; }
  .search svg { fill: none; stroke: #8b8b8e; stroke-width: 3; }
  .exts { display: flex; margin-left: 49px; }
  .badge { position: absolute; left: 24px; top: -9px; width: 24px; height: 21px; background: #666; color: #fff; font-size: 15.500px; font-weight: 700; line-height: 21px; text-align: center; }
  .menu { display: flex; flex-direction: column; gap: 5px; margin-left: 4px; padding: 16px 0 16px 20px; border-left: 1px solid #dedee0; }
  .menu span { width: 18px; height: 3px; border-radius: 2px; background: #4a4a4f; }

  .bookmarks { height: 33px; display: flex; align-items: center; font-size: 17px; letter-spacing: -0.2px; line-height: 24px; color: #0c0c0d; white-space: nowrap; }
  .visited { width: 164px; box-sizing: border-box; display: flex; align-items: center; gap: 8px; padding-left: 19px; letter-spacing: .1px; }
  .visited svg { width: 21px; height: 21px; fill: none; stroke: #4a4a4f; stroke-width: 3.200; }
  .bookmark { display: flex; align-items: center; gap: 6px; }
  .bookmark svg { width: 24px; height: 22px; }

  .viewport { height: 870px; margin-left: 9px; border-left: 1px solid #5c9c9c; border-bottom: 1px solid #5c9c9c; box-sizing: border-box; display: flex; background: #fff; overflow: hidden; }
  main { flex: 1; display: flex; padding-left: 197px; }
  .score { width: 203px; }
  .ring { width: 158px; height: 158px; margin-top: -12px; box-sizing: border-box; border: 10px solid #0bc470; border-radius: 50%; color: #2e2e5e; text-align: center; }
  .percent { padding-top: 35px; font-size: 39px; line-height: 50px; letter-spacing: -0.6px; }
  .correct { margin-top: -1px; font-size: 13px; letter-spacing: -0.08px; line-height: 18px; }

  .domain { width: 1279px; color: #54667a; }
  .eyebrow { font-size: 13px; line-height: 18px; letter-spacing: .5px; color: #54667a; }
  .top { margin-top: -12px; }
  h1 { padding-top: 6px; font-family: Lato, sans-serif; font-weight: 600; font-size: 31px; line-height: 35px; letter-spacing: 1px; color: #2e2e5e; white-space: nowrap; }
  .intro { margin-top: 6px; font-size: 16px; line-height: 25px; letter-spacing: -0.02px; white-space: nowrap; }
  .intro b, .facts b { font-weight: 600; }
  .table { margin-top: 7px; font-size: 14.500px; letter-spacing: -0.25px; }
  .tr { height: 43px; box-sizing: border-box; display: grid; grid-template-columns: 475px 199px 199px 253px 144px; padding-right: 9px; align-items: center; text-align: right; border-top: 1px solid #dcdcdc; }
  .tr:nth-child(2) { height: 42px; border-top: 0; }
  .tr.head { height: 45px; padding-bottom: 1px; border-top: 0; border-bottom: 2px solid #dadada; font-family: "DejaVu Sans Mono", monospace; font-weight: 700; font-size: 13.500px; letter-spacing: .3px; }
  .name { text-align: left; padding-left: 8px; }
  .blue { color: #4a90e2; }
  .hidden-value { filter: blur(5px); color: #54667a; letter-spacing: .6px; }
  .per { margin-top: 24px; }
  .results { display: grid; grid-template-columns: repeat(35, 36.430px); margin-top: 5px; }
  .cell { height: 21px; display: flex; align-items: flex-start; padding: 5px 0 0 4px; box-sizing: border-box; }
  .cell.wrong { padding: 0; margin-left: -4px; }
  .cell span { width: 24px; height: 9px; background: #0bc470; }
  .wrong span { width: 30px; height: 12px; border: solid #fff; border-width: 4px 5px 3px; background: #f5005e; box-shadow: 0 2px 5px #0000001a; }

  .card { position: relative; display: flex; height: 414px; margin-top: 45px; border-left: 3px solid #f5005e; border-radius: 5px; box-sizing: border-box; box-shadow: 0 2px 26px #00000014; background: #fff; }
  .pager { position: absolute; left: 21px; top: -21px; display: flex; gap: 0; }
  .pager span { width: 52.500px; height: 52.500px; border-radius: 50%; display: grid; place-items: center; background: #fff; box-shadow: 0 4px 10px #00000012; }
  .pager svg { width: 12px; height: 18px; fill: none; stroke: #2e2e5e; stroke-width: 3; }
  .question { width: 960px; box-sizing: border-box; padding: 50px 27px 0 26px; }
  h2 { margin-top: 5px; font-weight: 600; font-size: 18.500px; line-height: 27px; letter-spacing: -0.355px; color: #2e2e5e; white-space: nowrap; }
  .options { margin-top: 8px; }
  .options li { height: 25.300px; display: flex; align-items: center; font-size: 15px; letter-spacing: -0.35px; color: #66778a; }
  .options svg { width: 14px; height: 14px; margin: 2px 5px 0 4px; fill: none; stroke: #0bc470; stroke-width: 3; }
  .options .off svg { stroke: #b3bfca; stroke-width: 3.400; }
  .options .bad svg { stroke: #f5005e; stroke-width: 3.400; }
  .options .answer { padding-right: 1px; }
  .selected .answer { color: #2e2e5e; }
  .tag { width: 72px; height: 20px; border-radius: 3px; background: #f2f6f9; font-size: 11px; line-height: 20px; letter-spacing: -0.15px; text-align: center; color: #66778a; margin-top: 2px; }
  hr { margin: 19px 0 24px; border: 0; border-top: 1px solid #eaeaea; }
  .explain { margin-top: 5px; font-size: 14.500px; line-height: 21px; letter-spacing: -0.13px; white-space: nowrap; }
  .side { flex: 1; padding: 19px 0 0 26px; background: #fbfcfe; border-radius: 0 4px 4px 0; }
  .small { font-size: 12.500px; letter-spacing: .15px; }
  .resource { display: flex; align-items: center; gap: 5px; padding: 4px 0 0 3px; font-size: 13.500px; font-weight: 600; line-height: 22px; letter-spacing: -0.24px; color: #2e2e5e; white-space: nowrap; }
  .resource svg { width: 13px; height: 15px; fill: none; stroke: #54667a; stroke-width: 1.300; }
  .stats { margin-top: 12px; }
  .facts { margin-top: 3px; }
  .facts li { height: 24px; display: flex; align-items: center; gap: 7px; padding-left: 3px; font-size: 13.500px; letter-spacing: -0.17px; white-space: nowrap; }
  .facts .spent { letter-spacing: -0.08px; }
  .facts i { width: 6px; height: 6px; border-radius: 50%; background: #54667a; }

  .scrollbar { width: 25px; box-sizing: border-box; display: flex; flex-direction: column; align-items: center; background: #f0f0f0; padding: 11px 0 8px; }
  .scrollbar svg { width: 12px; height: 8px; fill: none; stroke: #505050; stroke-width: 2.200; }
  .thumb { width: 25px; height: 125px; margin: 250px 0 auto; background: #a6a6a6; }

  .taskbar { height: 56px; display: flex; align-items: center; background: radial-gradient(circle at 1723px 14px, #9cbdc0 4px, transparent 6px), radial-gradient(circle at 1907px 25px, #9cbdc0 5px, transparent 7px), radial-gradient(circle at 1815px 4px, #9cbdc0 3px, transparent 5px), radial-gradient(circle at 841px 14px, #9cb9bb 4px, transparent 6px), radial-gradient(circle at 434px 2px, #96656d 6px, transparent 9px), linear-gradient(90deg, #7b9ea0, #789a9c 60%, #5f8284 80%, #5c8082); border-top: 1px solid #6d9092; box-sizing: border-box; }
  .start { width: 70px; padding-left: 14px; box-sizing: border-box; }
  .start svg { width: 43px; height: 43px; fill: #fff; }
  .app { width: 71.050px; height: 55px; box-sizing: border-box; display: grid; place-items: center; }
  .app svg { width: 46px; height: 46px; }
  .app.firefox, .app.explorer, .app.snip { width: 68px; margin: 0 1.525px; border: 1px solid #d5e0e0; background: #a9bfc1; }
  .app.explorer, .app.snip { border-color: #9db8ba; background: #86a5a6; }
  .tray { display: flex; margin-left: 4px; }
  .tray-item { width: 35.950px; display: grid; place-items: center; }
  .tray-item svg { width: 24px; height: 24px; }
  .clock { width: 132px; font-size: 18.500px; line-height: 26px; letter-spacing: -0.55px; text-align: center; color: #fff; }
</style>
